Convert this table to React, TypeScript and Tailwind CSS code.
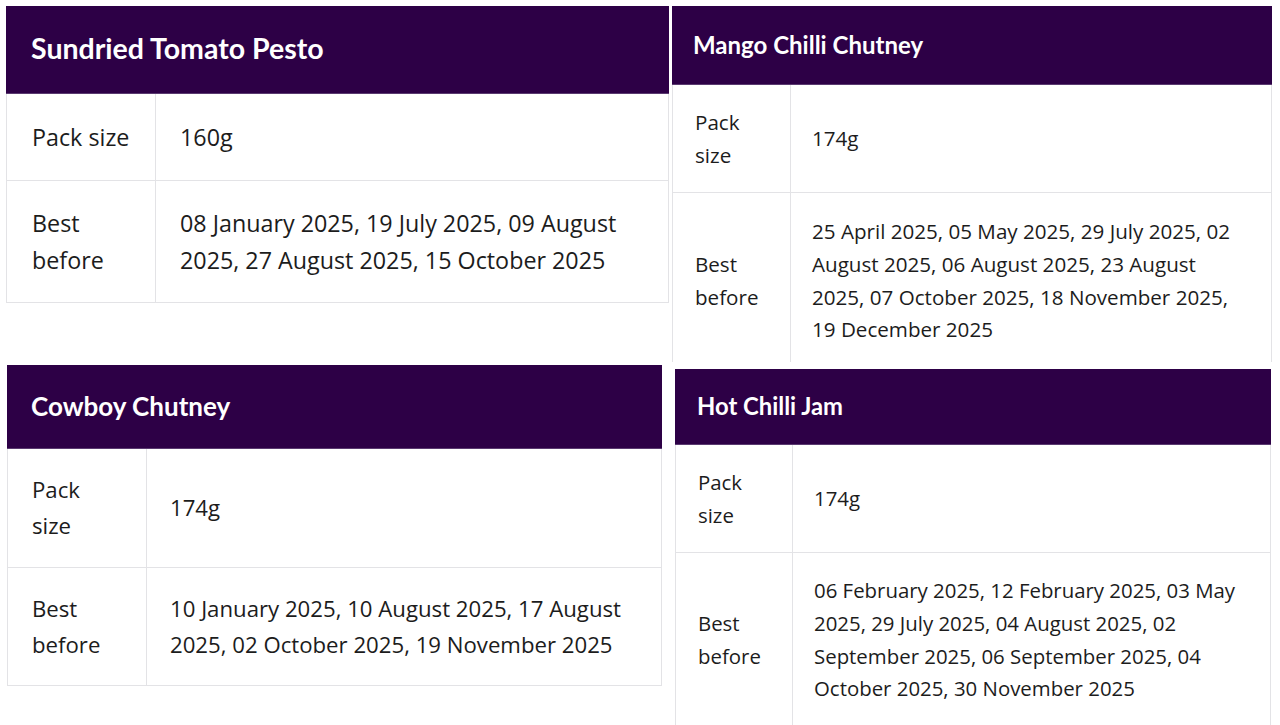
type Spec = {
  title: string;
  pack: string;
  best: string;
  wrap: string;
  head: string;
  title_: string;
  labelCol: string;
  valueCol: string;
  text: string;
  row1: string;
  row2: string;
};

const tables: Spec[] = [
  {
    title: "Sundried Tomato Pesto",
    pack: "160g",
    best: "08 January 2025, 19 July 2025, 09 August 2025, 27 August 2025, 15 October 2025",
    wrap: "ml-[6px] mt-[6px] w-[663px]",
    head: "h-[88px] pl-[25px] pb-[3px]",
    title_: "text-[28.5px]",
    labelCol: "w-[149px] pl-[25px] pr-[20px]",
    valueCol: "pl-[24px] pr-[24px]",
    text: "text-[23.3px] leading-[37px]",
    row1: "h-[87px]",
    row2: "h-[122px]",
  },
  {
    title: "Cowboy Chutney",
    pack: "174g",
    best: "10 January 2025, 10 August 2025, 17 August 2025, 02 October 2025, 19 November 2025",
    wrap: "ml-[7px] mt-[62px] w-[655px]",
    head: "h-[84px] pl-[24px] pb-[1px]",
    title_: "text-[26px]",
    labelCol: "w-[139px] pl-[24px] pr-[24px]",
    valueCol: "pl-[23px] pr-[16px]",
    text: "text-[22.2px] leading-[36px]",
    row1: "h-[119px]",
    row2: "h-[118px]",
  },
];

const right: Spec[] = [
  {
    title: "Mango Chilli Chutney",
    pack: "174g",
    best: "25 April 2025, 05 May 2025, 29 July 2025, 02 August 2025, 06 August 2025, 23 August 2025, 07 October 2025, 18 November 2025, 19 December 2025",
    wrap: "ml-[1px] mt-[6px] w-[600px] h-[356px] overflow-hidden",
    head: "h-[79px] pl-[21px]",
    title_: "text-[24px]",
    labelCol: "w-[118px] pl-[22px] pr-[21px]",
    valueCol: "pl-[21px] pr-[21px]",
    text: "text-[20.6px] leading-[32.6px]",
    row1: "h-[108px]",
    row2: "h-[176px]",
  },
  {
    title: "Hot Chilli Jam",
    pack: "174g",
    best: "06 February 2025, 12 February 2025, 03 May 2025, 29 July 2025, 04 August 2025, 02 September 2025, 06 September 2025, 04 October 2025, 30 November 2025",
    wrap: "ml-[4px] mt-[7px] w-[596px]",
    head: "h-[76px] pl-[22px]",
    title_: "text-[23.8px]",
    labelCol: "w-[117px] pl-[22px] pr-[21px]",
    valueCol: "pl-[21px] pr-[21px]",
    text: "text-[20.4px] leading-[32.7px]",
    row1: "h-[108px]",
    row2: "h-[174px]",
  },
];

function ProductTable({ t }: { t: Spec }) {
  return (
    <div className={t.wrap}>
      <div className={`flex items-center bg-[#2d0046] border-b border-[#5a3a70] ${t.head}`}>
        <h2 className={`font-['Lato',sans-serif] font-bold text-white ${t.title_}`}>{t.title}</h2>
      </div>
      <div className={`border-x border-[#e3e3e6] font-['Open_Sans',sans-serif] text-[#1c1c1c] ${t.text}`}>
        <div className={`flex border-b border-[#e3e3e6] ${t.row1}`}>
          <div className={`flex shrink-0 items-center border-r border-[#e3e3e6] ${t.labelCol}`}>Pack size</div>
          <div className={`flex flex-1 items-center ${t.valueCol}`}>{t.pack}</div>
        </div>
        <div className={`flex border-b border-[#e3e3e6] ${t.row2}`}>
          <div className={`flex shrink-0 items-center border-r border-[#e3e3e6] ${t.labelCol}`}>Best before</div>
          <div className={`flex flex-1 items-center ${t.valueCol}`}>{t.best}</div>
        </div>
      </div>
    </div>
  );
}

export default function App() {
  return (
    <div className="flex h-[725px] w-[1280px] overflow-hidden bg-white">
      <div className="w-[671px] shrink-0">
        {tables.map((t) => (
          <ProductTable key={t.title} t={t} />
        ))}
      </div>
      <div className="w-[609px] shrink-0">
        {right.map((t) => (
          <ProductTable key={t.title} t={t} />
        ))}
      </div>
    </div>
  );
}
